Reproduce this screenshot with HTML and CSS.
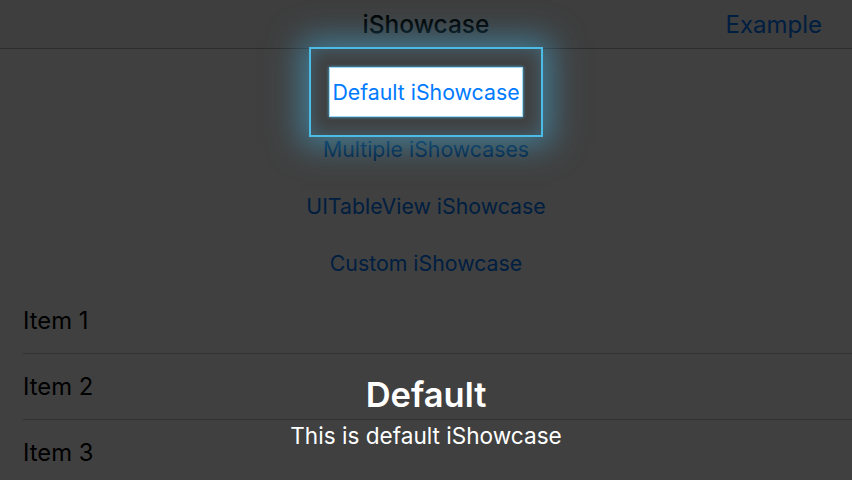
FILE: index.html
```html
<!DOCTYPE html>
<html lang="en">
<head>
    <meta charset="UTF-8">
    <meta name="viewport" content="width=device-width, initial-scale=1.0">
    <title>iShowcase</title>
    <link rel="stylesheet" href="styles.css">
</head>
<body>
    <div class="navbar">
        <div></div>
        <div class="nav-title">iShowcase</div>
        <a class="nav-button" href="#">Example</a>
    </div>

    <div class="buttons">
        <a class="btn highlighted" href="#">Default iShowcase</a>
        <a class="btn" href="#">Multiple iShowcases</a>
        <a class="btn" href="#">UITableView iShowcase</a>
        <a class="btn" href="#">Custom iShowcase</a>
    </div>

    <ul class="table">
        <li>Item 1</li>
        <li>Item 2</li>
        <li>Item 3</li>
    </ul>

    <div class="showcase">
        <div class="showcase-title">Default</div>
        <div class="showcase-detail">This is default iShowcase</div>
    </div>
</body>
</html>
```

FILE: styles.css
```css
body {
    margin: 0;
    width: 852px;
    height: 480px;
    overflow: hidden;
    position: relative;
    background: #ffffff;
    font-family: 'Inter', 'Liberation Sans', sans-serif;
    color: #000;
}

.navbar {
    height: 48px;
    background: #f7f7f7;
    border-bottom: 1px solid #b2b2b2;
    display: grid;
    grid-template-columns: 1fr auto 1fr;
    align-items: center;
}

.nav-title {
    font-size: 24.5px;
    font-weight: 500;
}

.nav-button {
    justify-self: end;
    margin-right: 30px;
    color: #007aff;
    text-decoration: none;
    font-size: 24px;
}

.buttons {
    display: flex;
    flex-direction: column;
    align-items: center;
    gap: 7px;
    padding-top: 18px;
}

.btn {
    height: 50px;
    padding: 0 3px;
    display: flex;
    align-items: center;
    white-space: nowrap;
    color: #007aff;
    text-decoration: none;
    font-size: 21.3px;
}

/* the highlighted button sits above the dim overlay */
.btn.highlighted {
    position: relative;
    z-index: 2;
}

.btn.highlighted::before {
    content: "";
    position: absolute;
    inset: -20px;
    border: 2px solid #4cbbe6;
    box-shadow: 0 0 30px 8px rgba(70, 185, 235, 0.5), inset 0 0 18px rgba(70, 185, 235, 0.32);
    z-index: -1;
}

.btn.highlighted::after {
    content: "";
    position: absolute;
    inset: 0;
    background: #fff;
    border: 1px solid #9fdcf7;
    box-shadow: 0 0 3px rgba(80, 190, 240, 0.9);
    z-index: -1;
}

.table {
    list-style: none;
    margin: 0;
    padding: 0;
}

.table li {
    height: 65px;
    margin-left: 23px;
    display: flex;
    align-items: center;
    font-size: 23.8px;
    border-bottom: 1px solid #c8c7cc;
}

.showcase {
    position: absolute;
    inset: 0;
    z-index: 1;
    background: rgba(0, 0, 0, 0.75);
    display: flex;
    flex-direction: column;
    align-items: center;
    padding-top: 373px;
    color: #fff;
}

.showcase-title {
    font-size: 34.5px;
    font-weight: 600;
    line-height: 44px;
}

.showcase-detail {
    font-size: 22.6px;
    line-height: 30px;
    margin-top: 4px;
}
```
